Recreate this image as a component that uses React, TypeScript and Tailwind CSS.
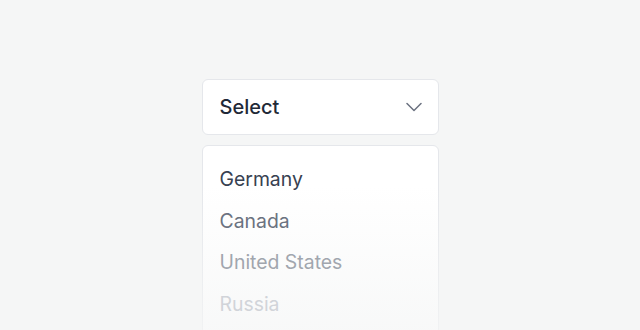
export default function App() {
  const items = [
    { label: "Germany", color: "text-[#374151]" },
    { label: "Canada", color: "text-[#6b7280]" },
    { label: "United States", color: "text-[#a1a6ae]" },
    { label: "Russia", color: "text-[#d1d4d9]" },
  ];

  return (
    <main
      className="h-[330px] w-[640px] overflow-hidden bg-[#f5f6f6]"
      style={{ fontFamily: "Inter, 'Noto Sans', sans-serif" }}
    >
      <div className="mx-auto w-[237px] pt-[79px]">
        {/* Trigger */}
        <button className="flex h-[56px] w-full items-center justify-between rounded-md border border-[#e5e7eb] bg-white pl-[17px] pr-[16px]">
          <span className="text-[20px] font-medium text-[#1f2937]">Select</span>
          <svg width="16" height="10" viewBox="0 0 16 10" fill="none">
            <path
              d="M1 1.5l7 7 7-7"
              stroke="#6b7280"
              strokeWidth="1.5"
              strokeLinecap="round"
              strokeLinejoin="round"
            />
          </svg>
        </button>

        {/* Options */}
        <div className="relative mt-[10px] h-[200px] rounded-md border border-[#e5e7eb] bg-white pt-[13px]">
          <div className="pointer-events-none absolute inset-x-[-2px] bottom-[-2px] top-[40px] bg-gradient-to-b from-transparent to-[#f5f6f6]/80" />
          <ul className="relative">
            {items.map((item) => (
              <li
                key={item.label}
                className={`h-[41.5px] pl-[17px] text-[19.4px] leading-[41.5px] ${item.color}`}
              >
                {item.label}
              </li>
            ))}
          </ul>
        </div>
      </div>
    </main>
  );
}
